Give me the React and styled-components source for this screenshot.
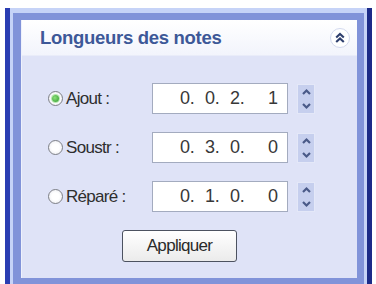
import React, { useState } from "react"
import styled, { createGlobalStyle } from "styled-components"

const Global = createGlobalStyle`
html,body{margin:0;padding:0;background:#fff;}
body{font-family:"Liberation Sans",Arial,sans-serif;}
`

const Page = styled.div`
width:376px;
height:284px;
padding:8px 4px 0 5px;
box-sizing:border-box;
overflow:hidden;
`

const Frame = styled.div`
height:100%;
border-left:5px solid #2a3db2;
border-right:5px solid #1c2b88;
padding:5px 3px 0 3px;
background:#c6d3f7;
box-sizing:border-box;
`

const Rim = styled.div`
height:100%;
background:#8193d9;
padding:7px 7px 0 8px;
box-sizing:border-box;
`

const Panel = styled.div`
height:258px;
background:#dfe3f7;
border-left:1px solid #eef1fc;
display:flex;
flex-direction:column;
`

const Header = styled.div`
height:35px;
display:flex;
align-items:center;
justify-content:space-between;
padding:0 7px 0 18px;
background:linear-gradient(#ffffff,#f2f4fc);
border-bottom:1px solid #e9ecf9;
`

const Title = styled.div`
font-weight:bold;
font-size:18.5px;
letter-spacing:-0.3px;
color:#3d5898;
`

const Collapse = styled.button`
width:20px;
height:20px;
border-radius:50%;
border:1px solid #d3d9ee;
background:#ffffff;
padding:0;
display:flex;
align-items:center;
justify-content:center;
`

const Body = styled.div`
padding:27px 0 0 26px;
display:flex;
flex-direction:column;
gap:18px;
`

const Row = styled.div`
display:flex;
align-items:center;
height:31px;
`

const Choice = styled.label`
width:104px;
display:flex;
align-items:center;
gap:3px;
font-size:17px;
letter-spacing:-0.7px;
color:#2e2e2e;
cursor:pointer;
`

const Radio = styled.span`
width:13px;
height:13px;
border-radius:50%;
border:1px solid #7d7f86;
background:radial-gradient(circle,#ffffff 40%,#e4e6ec 100%);
display:flex;
align-items:center;
justify-content:center;
&::after{
  content:"";
  width:7px;
  height:7px;
  border-radius:50%;
  background:radial-gradient(circle at 40% 40%,#8de07a,#2c9a2c);
  box-shadow:0 0 0 1px #b7e8ae;
  display:${p => (p.$on ? "block" : "none")};
}
`

const Field = styled.div`
width:136px;
height:31px;
box-sizing:border-box;
border:1px solid #a3abbf;
background:#fff;
display:grid;
grid-template-columns:25px 25px 38px auto;
align-items:center;
padding-left:27px;
font-size:18px;
letter-spacing:-0.3px;
color:#383838;
`

const Spin = styled.div`
width:18px;
height:30px;
box-sizing:border-box;
margin-left:9px;
background:#c6cfee;
border:1px solid #e4e8f8;
display:flex;
flex-direction:column;
align-items:center;
justify-content:space-between;
padding:3px 0;
`

const Apply = styled.button`
margin:0 0 0 74px;
width:115px;
height:32px;
border:1px solid #4c5260;
border-radius:3px;
background:linear-gradient(#ffffff,#ebebeb);
font-family:"Liberation Sans",Arial,sans-serif;
font-size:17px;
letter-spacing:-0.7px;
color:#2a2a2a;
`

const Chevron = ({ up }) => (
  <svg width="11" height="8" viewBox="0 0 11 8">
    <path d={up ? "M2 6 L5.5 2.5 L9 6" : "M2 2 L5.5 5.5 L9 2"} fill="none" stroke="#4a5a88" strokeWidth="2.2" />
  </svg>
)

const rows = [
  { label: "Ajout :", parts: ["0.", "0.", "2.", "1"] },
  { label: "Soustr :", parts: ["0.", "3.", "0.", "0"] },
  { label: "Réparé :", parts: ["0.", "1.", "0.", "0"] },
]

export default function App() {
  const [sel, setSel] = useState(0)
  return (
    <Page>
      <Global />
      <Frame>
        <Rim>
          <Panel>
            <Header>
              <Title>Longueurs des notes</Title>
              <Collapse>
                <svg width="12" height="12" viewBox="0 0 12 12">
                  <path d="M2.2 5.6 L6 2 L9.8 5.6 M2.2 10 L6 6.4 L9.8 10" fill="none" stroke="#2e3f6e" strokeWidth="2.1" />
                </svg>
              </Collapse>
            </Header>
            <Body>
              {rows.map((r, i) => (
                <Row key={r.label}>
                  <Choice onClick={() => setSel(i)}>
                    <Radio $on={sel === i} />
                    {r.label}
                  </Choice>
                  <Field>
                    {r.parts.map((p, j) => (
                      <span key={j}>{p}</span>
                    ))}
                  </Field>
                  <Spin>
                    <Chevron up />
                    <Chevron />
                  </Spin>
                </Row>
              ))}
              <Apply>Appliquer</Apply>
            </Body>
          </Panel>
        </Rim>
      </Frame>
    </Page>
  )
}
